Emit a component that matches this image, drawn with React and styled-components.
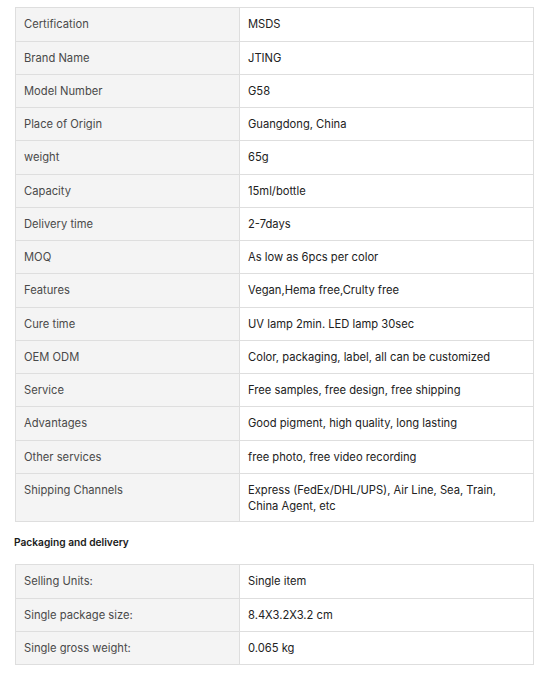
import React from "react";
import styled, { createGlobalStyle } from "styled-components";

const Global = createGlobalStyle`
  html, body { margin: 0; padding: 0; background: #fff; }
  body { font-family: Inter, "Noto Sans", sans-serif; }
`;

const Page = styled.div`
  padding: 7.3px 0 0 15px;
  width: 519px;
`;

const Table = styled.table`
  width: 100%;
  border-collapse: collapse;
  table-layout: fixed;
  font-size: 11.2px;
  line-height: 16px;
`;

const Row = styled.tr`
  height: ${(p) => (p.$tall ? "47.6px" : "33.25px")};
`;

const Label = styled.td`
  width: 224px;
  box-sizing: border-box;
  background: #f4f4f4;
  color: #4a4a4a;
  border: 1px solid #dedede;
  padding: 8px 8px 7px;
  vertical-align: top;
`;

const Value = styled.td`
  background: #fff;
  color: #222;
  border: 1px solid #dedede;
  padding: 8px 8px 7px;
  vertical-align: top;
`;

const Heading = styled.h3`
  margin: 0;
  padding: 13px 0 15.7px 0;
  margin-left: -1px;
  font-size: 10.2px;
  line-height: 14px;
  font-weight: 600;
  color: #1a1a1a;
`;

const attrs = [
  ["Certification", "MSDS"],
  ["Brand Name", "JTING"],
  ["Model Number", "G58"],
  ["Place of Origin", "Guangdong, China"],
  ["weight", "65g"],
  ["Capacity", "15ml/bottle"],
  ["Delivery time", "2-7days"],
  ["MOQ", "As low as 6pcs per color"],
  ["Features", "Vegan,Hema free,Crulty free"],
  ["Cure time", "UV lamp 2min. LED lamp 30sec"],
  ["OEM ODM", "Color, packaging, label, all can be customized"],
  ["Service", "Free samples, free design, free shipping"],
  ["Advantages", "Good pigment, high quality, long lasting"],
  ["Other services", "free photo, free video recording"],
  ["Shipping Channels", "Express (FedEx/DHL/UPS), Air Line, Sea, Train, China Agent, etc", true],
];

const packaging = [
  ["Selling Units:", "Single item"],
  ["Single package size:", "8.4X3.2X3.2 cm"],
  ["Single gross weight:", "0.065 kg"],
];

function SpecTable({ rows }) {
  return (
    <Table>
      <tbody>
        {rows.map(([k, v, tall]) => (
          <Row key={k} $tall={tall}>
            <Label>{k}</Label>
            <Value>{v}</Value>
          </Row>
        ))}
      </tbody>
    </Table>
  );
}

export default function App() {
  return (
    <Page>
      <Global />
      <SpecTable rows={attrs} />
      <Heading>Packaging and delivery</Heading>
      <SpecTable rows={packaging} />
    </Page>
  );
}
